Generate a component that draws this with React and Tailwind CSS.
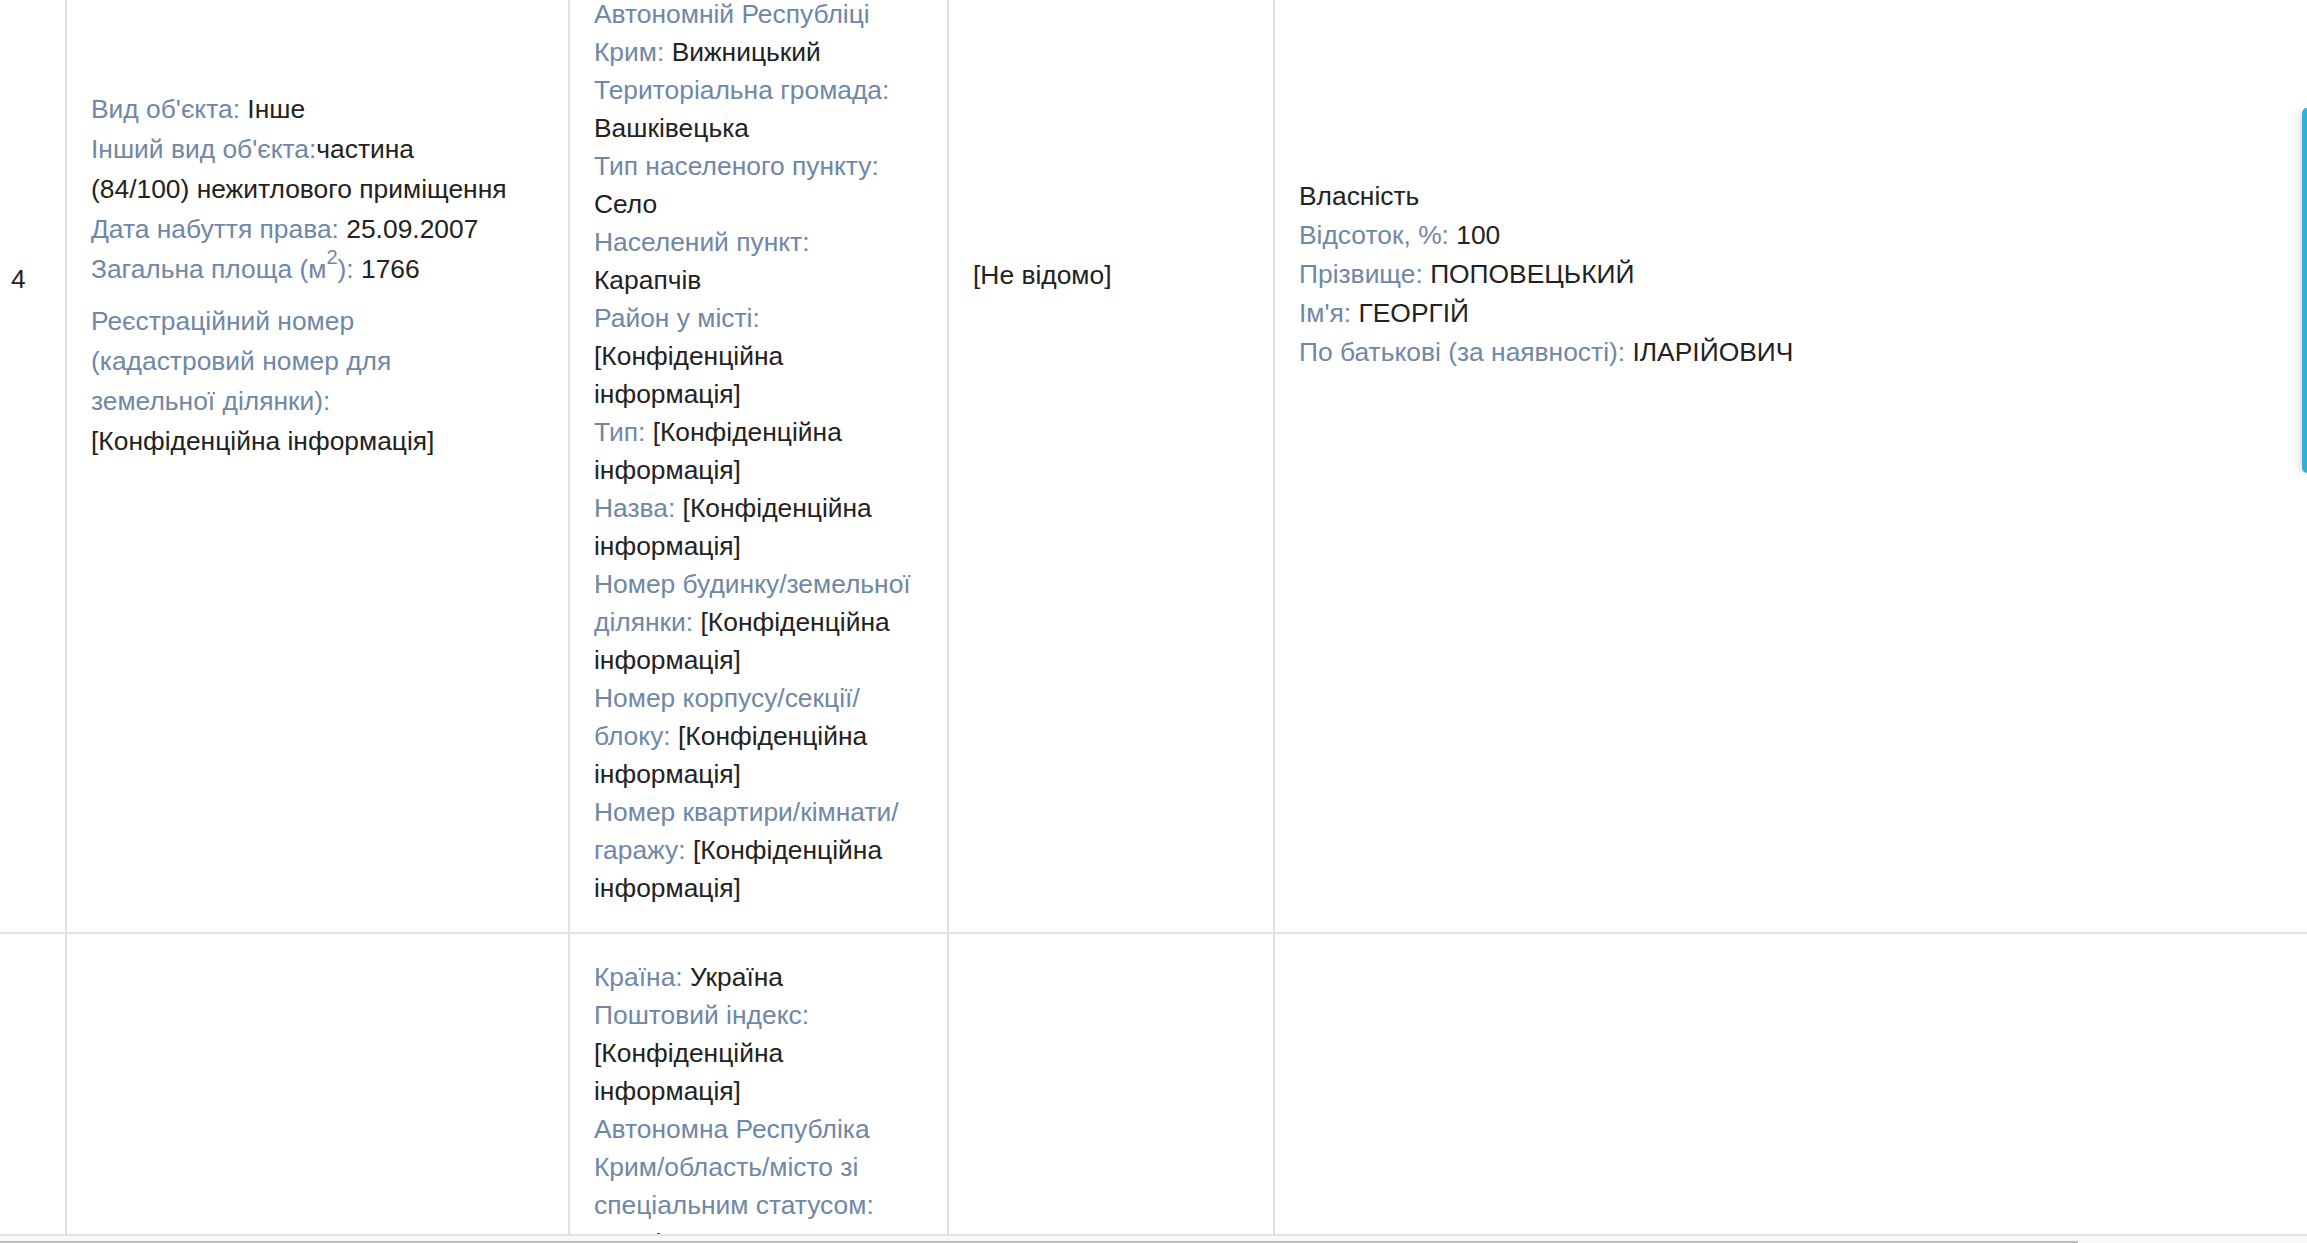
const L = ({ children }) => <span className="text-[#6f87a8]">{children}</span>;

function Address() {
  return (
    <>
      <div>
        <L>Країна:</L> Україна
      </div>
      <div>
        <L>Поштовий індекс:</L>
        <br />
        [Конфіденційна
        <br />
        інформація]
      </div>
      <div>
        <L>
          Автономна Республіка
          <br />
          Крим/область/місто зі
          <br />
          спеціальним статусом:
        </L>
        <br />
        Чернівецька
      </div>
      <div>
        <L>
          Район в області/
          <br />
          Автономній Республіці
          <br />
          Крим:
        </L>{" "}
        Вижницький
      </div>
      <div>
        <L>Територіальна громада:</L>
        <br />
        Вашківецька
      </div>
      <div>
        <L>Тип населеного пункту:</L>
        <br />
        Село
      </div>
      <div>
        <L>Населений пункт:</L>
        <br />
        Карапчів
      </div>
      <div>
        <L>Район у місті:</L>
        <br />
        [Конфіденційна
        <br />
        інформація]
      </div>
      <div>
        <L>Тип:</L> [Конфіденційна
        <br />
        інформація]
      </div>
      <div>
        <L>Назва:</L> [Конфіденційна
        <br />
        інформація]
      </div>
      <div>
        <L>
          Номер будинку/земельної
          <br />
          ділянки:
        </L>{" "}
        [Конфіденційна
        <br />
        інформація]
      </div>
      <div>
        <L>
          Номер корпусу/секції/
          <br />
          блоку:
        </L>{" "}
        [Конфіденційна
        <br />
        інформація]
      </div>
      <div>
        <L>
          Номер квартири/кімнати/
          <br />
          гаражу:
        </L>{" "}
        [Конфіденційна
        <br />
        інформація]
      </div>
    </>
  );
}

export default function App() {
  const cell = "border-b-2 border-[#dee2e6]";
  const sep = "border-l-2 border-[#dee2e6]";

  return (
    <div className="relative w-full h-[1243px] overflow-hidden bg-white font-['Liberation_Sans',Arial,sans-serif] text-[26.4px] text-[#222]">
      <div className="h-[1234px] overflow-hidden">
        {/* table is scrolled: first row starts above the viewport */}
        <div className="-mt-[383px] grid grid-cols-[65px_503px_379px_326px_1fr]">
          <div className={`${cell} flex flex-col justify-center pl-[11px] pt-[8px] leading-[38px]`}>
            4
          </div>
          <div className={`${cell} ${sep} flex flex-col justify-center px-[24px] leading-[40px] whitespace-nowrap`}>
            <div>
              <L>Вид об'єкта:</L> Інше
            </div>
            <div>
              <L>Інший вид об'єкта:</L>частина
              <br />
              (84/100) нежитлового приміщення
            </div>
            <div>
              <L>Дата набуття права:</L> 25.09.2007
            </div>
            <div>
              <L>
                Загальна площа (м
                <span className="relative -top-[14px] text-[20px]">2</span>):
              </L>{" "}
              1766
            </div>
            <div className="mt-[10px]">
              <L>
                Реєстраційний номер
                <br />
                (кадастровий номер для
                <br />
                земельної ділянки):
              </L>
              <br />
              [Конфіденційна інформація]
            </div>
          </div>
          <div className={`${cell} ${sep} px-[24px] pt-[36px] pb-[25px] leading-[38px] whitespace-nowrap`}>
            <Address />
          </div>
          <div className={`${cell} ${sep} flex flex-col justify-center px-[24px] leading-[38px]`}>
            [Не відомо]
          </div>
          <div className={`${cell} ${sep} flex flex-col justify-center px-[24px] leading-[39px] whitespace-nowrap`}>
            <div>Власність</div>
            <div>
              <L>Відсоток, %:</L> 100
            </div>
            <div>
              <L>Прізвище:</L> ПОПОВЕЦЬКИЙ
            </div>
            <div>
              <L>Ім'я:</L> ГЕОРГІЙ
            </div>
            <div>
              <L>По батькові (за наявності):</L> ІЛАРІЙОВИЧ
            </div>
          </div>

          <div className={cell}></div>
          <div className={`${cell} ${sep}`}></div>
          <div className={`${cell} ${sep} px-[24px] pt-[24px] pb-[24px] leading-[38px] whitespace-nowrap`}>
            <Address />
          </div>
          <div className={`${cell} ${sep}`}></div>
          <div className={`${cell} ${sep}`}></div>
        </div>
      </div>

      <div className="h-[2px] bg-[#e3e3e3]"></div>
      <div className="relative h-[7px] bg-[#f8f8f8]">
        <div className="absolute left-0 bottom-0 w-[2078px] h-[2px] bg-[#bfbfbf]"></div>
      </div>

      <div className="absolute right-0 top-[108px] w-[5px] h-[365px] rounded-l-[5px] bg-[#35b0d3] shadow-[-2px_0_8px_rgba(0,0,0,0.18)]"></div>
    </div>
  );
}
